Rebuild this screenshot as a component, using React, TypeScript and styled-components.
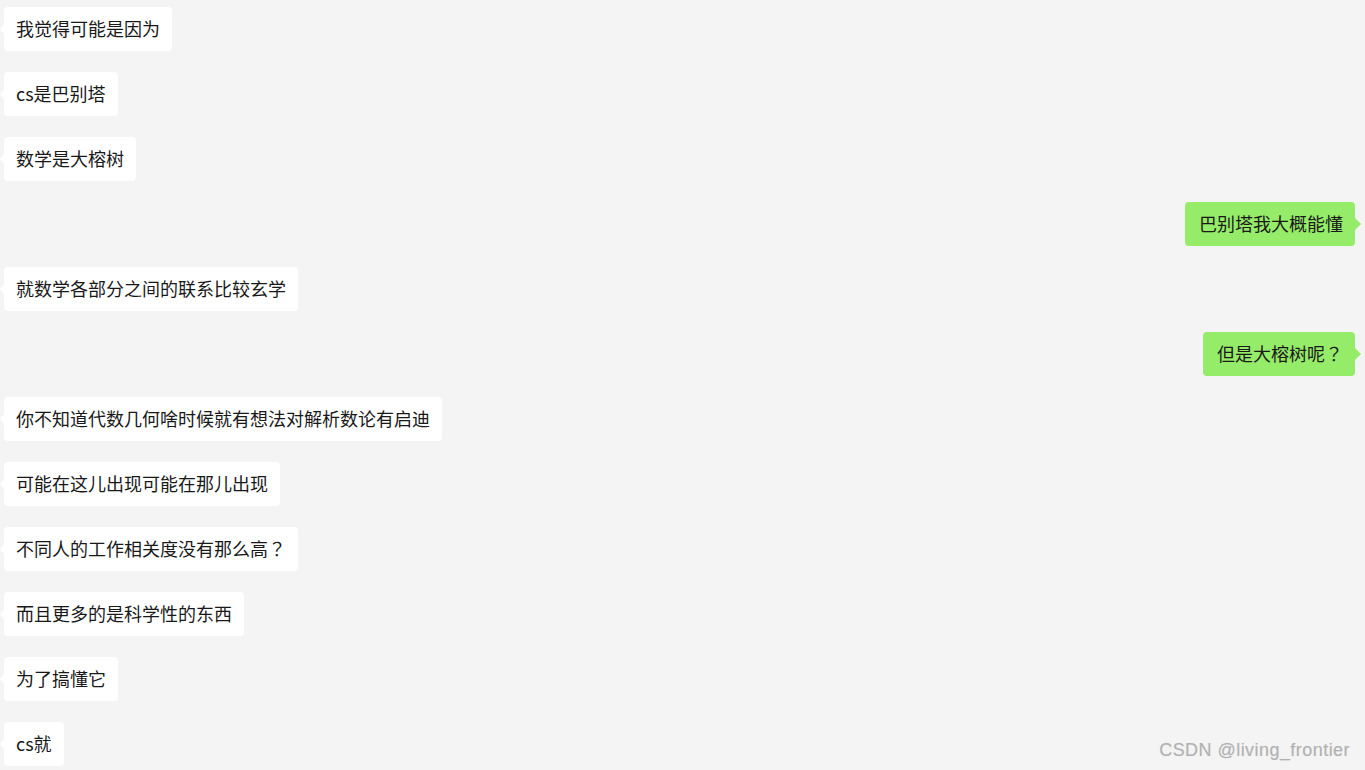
import React from 'react';
import styled, { createGlobalStyle } from 'styled-components';

interface Message {
  text: string;
  mine?: boolean;
}

const messages: Message[] = [
  { text: '我觉得可能是因为' },
  { text: 'cs是巴别塔' },
  { text: '数学是大榕树' },
  { text: '巴别塔我大概能懂', mine: true },
  { text: '就数学各部分之间的联系比较玄学' },
  { text: '但是大榕树呢？', mine: true },
  { text: '你不知道代数几何啥时候就有想法对解析数论有启迪' },
  { text: '可能在这儿出现可能在那儿出现' },
  { text: '不同人的工作相关度没有那么高？' },
  { text: '而且更多的是科学性的东西' },
  { text: '为了搞懂它' },
  { text: 'cs就' },
];

// full-width question marks sit centred in their cell in the original
const renderText = (text: string) =>
  text.split(/(？)/).map((part, i) =>
    part === '？' ? <Punct key={i}>{part}</Punct> : part,
  );

const App: React.FC = () => (
  <>
    <GlobalStyle />
    <Chat>
      {messages.map((m, i) => (
        <Row key={i} mine={m.mine}>
          <Bubble mine={m.mine}>{renderText(m.text)}</Bubble>
        </Row>
      ))}
    </Chat>
    <Watermark>CSDN @living_frontier</Watermark>
  </>
);

export default App;

const GlobalStyle = createGlobalStyle`
  html, body {
    margin: 0;
    padding: 0;
    background: #f4f4f4;
  }
  body {
    width: 1365px;
    height: 770px;
    overflow: hidden;
    position: relative;
  }
`;

const Chat = styled.div`
  display: flex;
  flex-direction: column;
  gap: 21px;
  padding: 7px 10px 0 4px;
`;

const Row = styled.div<{ mine?: boolean }>`
  display: flex;
  justify-content: ${p => (p.mine ? 'flex-end' : 'flex-start')};
`;

const Bubble = styled.div<{ mine?: boolean }>`
  position: relative;
  box-sizing: border-box;
  height: 44px;
  padding: 0 12px 3px ${p => (p.mine ? '14px' : '12px')};
  display: flex;
  align-items: center;
  border-radius: 4px;
  background: ${p => (p.mine ? '#95ec69' : '#ffffff')};
  color: #191919;
  font-family: 'Microsoft YaHei', 'Noto Sans CJK SC', 'Noto Sans', sans-serif;
  font-size: 18px;
  white-space: nowrap;

  &::before {
    content: '';
    position: absolute;
    top: 50%;
    margin-top: -6px;
    border: 6px solid transparent;
    ${p =>
      p.mine
        ? `right: -11px; border-left: 6px solid #95ec69; border-right-width: 5px;`
        : `left: -7px; border-right: 4px solid #ffffff; border-left-width: 3px; border-top-width: 5px; border-bottom-width: 5px; margin-top: -5px;`}
  }
`;

const Punct = styled.span`
  font-family: 'Noto Sans CJK TC', 'Noto Sans CJK SC', sans-serif;
`;

const Watermark = styled.div`
  position: absolute;
  right: 15px;
  bottom: 9px;
  font-family: 'Liberation Sans', Arial, sans-serif;
  font-size: 18px;
  color: #b2b2b2;
  text-shadow: 0 0 1px #d8d8d8;
  letter-spacing: 0.45px;
`;
